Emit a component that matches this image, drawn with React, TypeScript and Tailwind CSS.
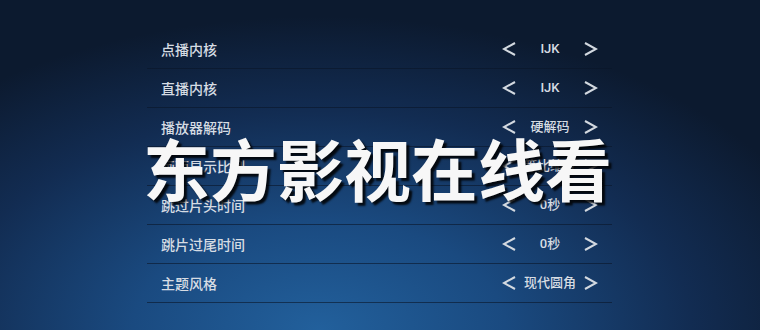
import React from 'react';

const rows = [
  { label: '点播内核', value: 'IJK' },
  { label: '直播内核', value: 'IJK' },
  { label: '播放器解码', value: '硬解码' },
  { label: '画面显示比例', value: '等比缩放' },
  { label: '跳过片头时间', value: '0秒' },
  { label: '跳片过尾时间', value: '0秒' },
  { label: '主题风格', value: '现代圆角' },
];

function Chevron({ dir }: { dir: 'left' | 'right' }) {
  return (
    <svg width="15" height="16" viewBox="0 0 15 16" fill="none">
      <polyline
        points={dir === 'left' ? '13,2 2,8 13,14' : '2,2 13,8 2,14'}
        stroke="#d3d9e0"
        strokeWidth="2"
      />
    </svg>
  );
}

export default function App() {
  return (
    <div
      className="relative w-[760px] h-[330px] overflow-hidden bg-[radial-gradient(ellipse_70%_95%_at_42%_100%,#22609c_0%,#1a4a80_35%,#122c52_70%,#0c1a2f_100%)]"
      style={{ fontFamily: '"Noto Sans", "Noto Sans CJK SC", sans-serif' }}
    >
      {/* Settings list */}
      <div className="ml-[147px] mt-[30px] w-[465px] flex flex-col">
        {rows.map((row) => (
          <div
            key={row.label}
            className="h-[39px] flex items-center justify-between border-b border-[#0a1628]/60 pl-[14px] pr-[14px]"
          >
            <span className="text-[14px] font-medium text-[#d6dce3]">{row.label}</span>
            <div className="w-[96px] flex items-center justify-between">
              <Chevron dir="left" />
              <span
                className="text-[13px] font-medium text-[#d6dce3]"
                style={{ fontFamily: 'Roboto, "Noto Sans CJK SC", sans-serif' }}
              >
                {row.value}
              </span>
              <Chevron dir="right" />
            </div>
          </div>
        ))}
      </div>

      {/* Title overlay */}
      <div
        className="absolute left-[143px] top-[133px] text-[67px] leading-none font-bold text-[#f7f7f7] whitespace-nowrap"
        style={{
          fontFamily: '"Noto Sans CJK SC", sans-serif',
          textShadow: '3px 3px 2px rgba(0,0,0,0.85)',
        }}
      >
        东方影视在线看
      </div>
    </div>
  );
}
